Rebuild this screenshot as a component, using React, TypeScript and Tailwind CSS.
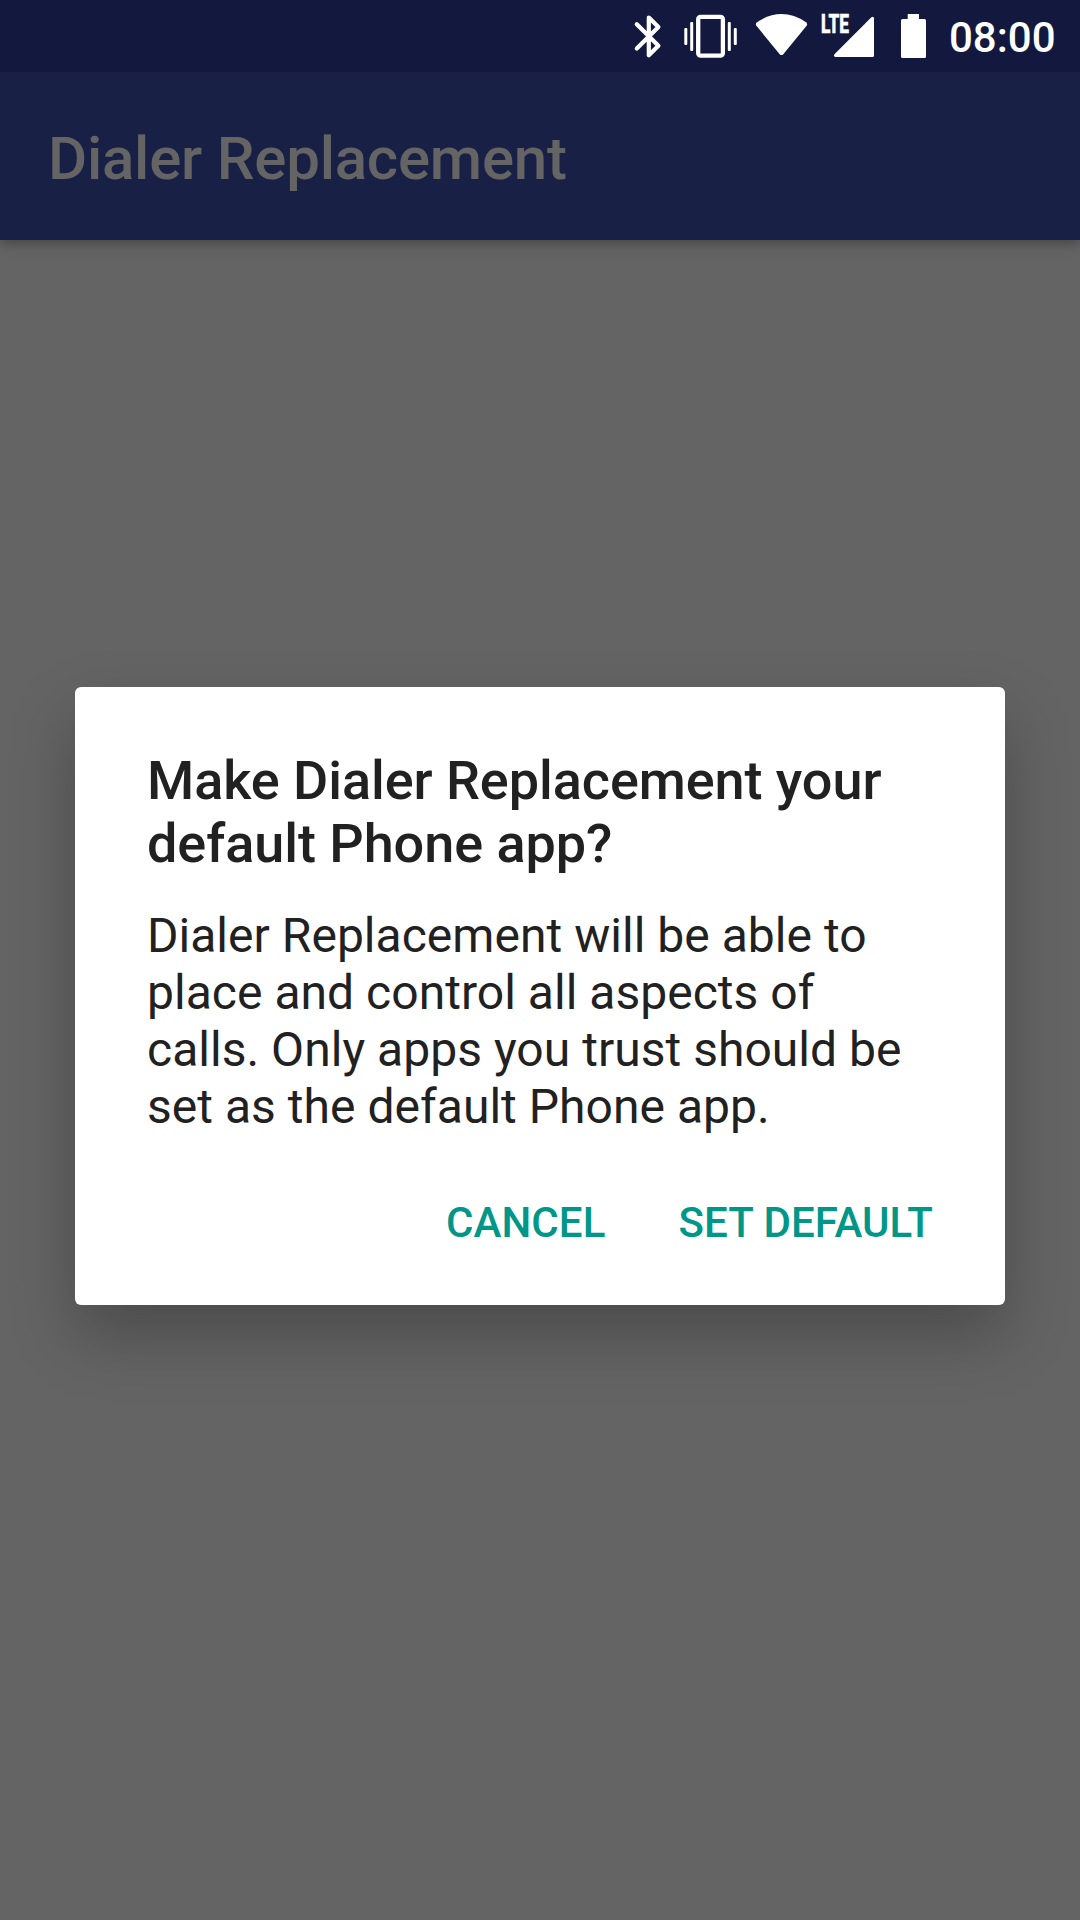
function StatusIcons() {
  return (
    <svg className="h-[72px] w-[320px] shrink-0" viewBox="620 0 320 72" fill="currentColor">
      <path
        d="M636.8 24.2L658.4 45.7L648.8 55.2V17.6L658.4 27.1L636.8 48.6"
        fill="none"
        stroke="currentColor"
        strokeWidth="4.2"
        strokeLinecap="round"
        strokeLinejoin="round"
      />
      <rect x="698.2" y="16.9" width="24.7" height="38.8" rx="2.4" fill="none" stroke="currentColor" strokeWidth="4.3" />
      <rect x="690.2" y="22" width="3" height="29" rx="1" />
      <rect x="684.3" y="28" width="3" height="17" rx="1" />
      <rect x="727.8" y="22" width="3" height="29" rx="1" />
      <rect x="733.8" y="28" width="3" height="17" rx="1" />
      <path d="M756.6 22.4Q781.5 5.8 806.4 22.4Q807.8 24 806.6 25.8L783.3 54.2Q781.5 56 779.7 54.2L756.4 25.8Q755.2 24 756.6 22.4Z" />
      <text
        x="821"
        y="33.3"
        fontSize="25.5"
        fontWeight="800"
        stroke="currentColor"
        strokeWidth="0.6"
        textLength="28"
        lengthAdjust="spacingAndGlyphs"
      >
        LTE
      </text>
      <path d="M871.4 17.3Q874 15.8 874 18.6V55.5Q874 57 872.5 57H835.5Q832.8 56.4 834.7 54Z" />
      <path d="M907.7 14H919V19H924.5Q926 19 926 20.5V56.5Q926 58 924.5 58H902.5Q901 58 901 56.5V20.5Q901 19 902.5 19H907.7Z" />
    </svg>
  );
}

export default function App() {
  return (
    <div className="relative flex h-[1920px] w-[1080px] flex-col overflow-hidden bg-[#646464] font-['Roboto',sans-serif]">
      <header className="bg-[#192046] shadow-[0_3px_12px_rgba(0,0,0,0.33)]">
        <div className="flex h-[72px] items-center justify-end bg-[#13193e] pr-6 text-white">
          <StatusIcons />
          <span className="w-[116px] pr-[0.5px] pt-[3px] text-right text-[42px] font-medium leading-[48px]">08:00</span>
        </div>
        <div className="flex h-[168px] items-center px-12 pt-[5px]">
          <h1 className="text-[60px] font-medium leading-[70px] tracking-[-0.23px] text-[#646464]">Dialer Replacement</h1>
        </div>
      </header>
      <main className="flex flex-1 flex-col px-[75px] pt-[447px]">
        <section className="h-[618px] rounded-[6px] bg-white px-[72px] pt-[62px] text-[#212121] shadow-[0_30px_64px_rgba(0,0,0,0.25)]">
          <h2 className="text-[54px] font-medium leading-[63px] tracking-[-0.06px]">
            Make Dialer Replacement your
            <br />
            default Phone app?
          </h2>
          <p className="mt-[32px] text-[48px] leading-[57px] tracking-[0.03px]">
            Dialer Replacement will be able to
            <br />
            place and control all aspects of
            <br />
            calls. Only apps you trust should be
            <br />
            set as the default Phone app.
          </p>
          <div className="mt-[56px] flex justify-end gap-[73px] text-[42px] font-medium tracking-[0.1px] text-[#009688]">
            <button>CANCEL</button>
            <button>SET DEFAULT</button>
          </div>
        </section>
      </main>
    </div>
  );
}
